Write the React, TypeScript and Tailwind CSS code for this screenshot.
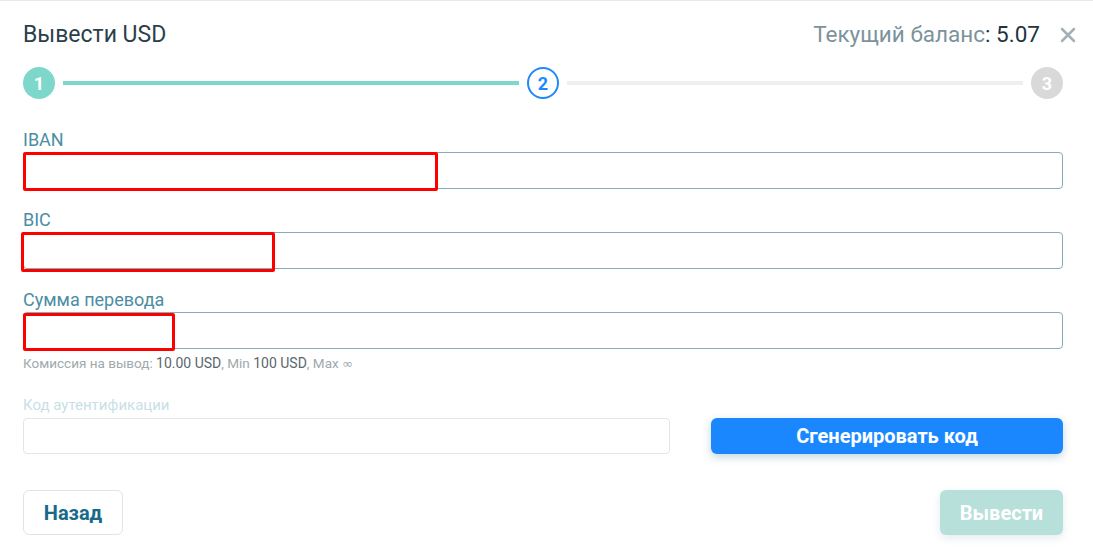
import { X } from "lucide-react";

const Field = ({ label, redact }: { label: string; redact: string }) => (
  <div className="relative">
    <label className="block text-[18px] leading-[20px] text-[#4b8ea3]">{label}</label>
    <input className="mt-[2px] block h-[37px] w-full rounded-[4px] border border-[#86adb7] bg-white px-3 outline-none" />
    <div className={`pointer-events-none absolute rounded-[2px] border-[3px] border-[#ff0000] ${redact}`} />
  </div>
);

const Step = ({ n, state }: { n: number; state: "done" | "active" | "todo" }) => {
  const cls =
    state === "done"
      ? "bg-[#7dd8cb] text-white"
      : state === "active"
        ? "border-2 border-[#1e88ff] bg-white text-[#1e88ff]"
        : "bg-[#d9d9d9] text-white";
  return (
    <div className={`flex h-[32px] w-[32px] shrink-0 items-center justify-center rounded-full text-[18px] font-bold ${cls}`}>
      {n}
    </div>
  );
};

export default function App() {
  return (
    <div className="h-[553px] w-[1093px] overflow-hidden border-t border-[#e6ebee] bg-white pl-[23px] pr-[30px] font-['Roboto',sans-serif]">
      <div className="flex h-[66px] items-center justify-between pt-[2px]">
        <h2 className="text-[23px] text-[#2b3f4b]">Вывести USD</h2>
        <div className="flex items-center">
          <span className="text-[22.5px] text-[#7c939b]">
            Текущий баланс<span className="text-[#22343f]">: 5.07</span>
          </span>
          <X className="ml-[16px] mr-[-17px] h-[24px] w-[24px] text-[#a3b0b6]" strokeWidth={2.5} />
        </div>
      </div>

      <div className="flex items-center">
        <Step n={1} state="done" />
        <div className="mx-[8px] h-[4px] flex-1 bg-[#7dd8cb]" />
        <Step n={2} state="active" />
        <div className="mx-[8px] h-[4px] flex-1 bg-[#efefef]" />
        <Step n={3} state="todo" />
      </div>

      <div className="mt-[31px] flex flex-col gap-[21px]">
        <Field label="IBAN" redact="left-0 top-[22px] h-[39px] w-[415px]" />
        <Field label="BIC" redact="left-[-2px] top-[22px] h-[40px] w-[254px]" />
        <div>
          <Field label="Сумма перевода" redact="left-0 top-[23px] h-[38px] w-[152px]" />
          <p className="mt-[6px] text-[13.5px] leading-[16px] text-[#a0a9ad]">
            Комиссия на вывод: <span className="text-[14px] text-[#5b676c]">10.00 USD</span>, Min{" "}
            <span className="text-[14px] text-[#5b676c]">100 USD</span>, Max{" "}
            <span className="font-['DejaVu_Sans',sans-serif] text-[13px]">∞</span>
          </p>
        </div>
      </div>

      <div className="mt-[24px] flex items-end gap-[41px]">
        <div className="flex-1">
          <label className="block text-[15px] leading-[18px] text-[#c7dfe5]">Код аутентификации</label>
          <input className="mt-[4px] block h-[36px] w-full rounded-[4px] border border-[#dfe7ea] bg-white px-3 outline-none" />
        </div>
        <button className="h-[36px] w-[352px] rounded-[6px] bg-[#1a87ff] text-[20px] font-bold text-white shadow-[0_3px_8px_rgba(20,90,120,0.25)]">
          Сгенерировать код
        </button>
      </div>

      <div className="mt-[36px] flex items-center justify-between">
        <button className="h-[45px] w-[100px] rounded-[6px] border border-[#dce5e8] bg-white text-[20px] font-bold text-[#176a8a]">
          Назад
        </button>
        <button className="h-[45px] w-[123px] rounded-[6px] bg-[#b8e0db] text-[20px] font-bold text-white shadow-[0_3px_8px_rgba(20,90,120,0.12)]">
          Вывести
        </button>
      </div>
    </div>
  );
}
